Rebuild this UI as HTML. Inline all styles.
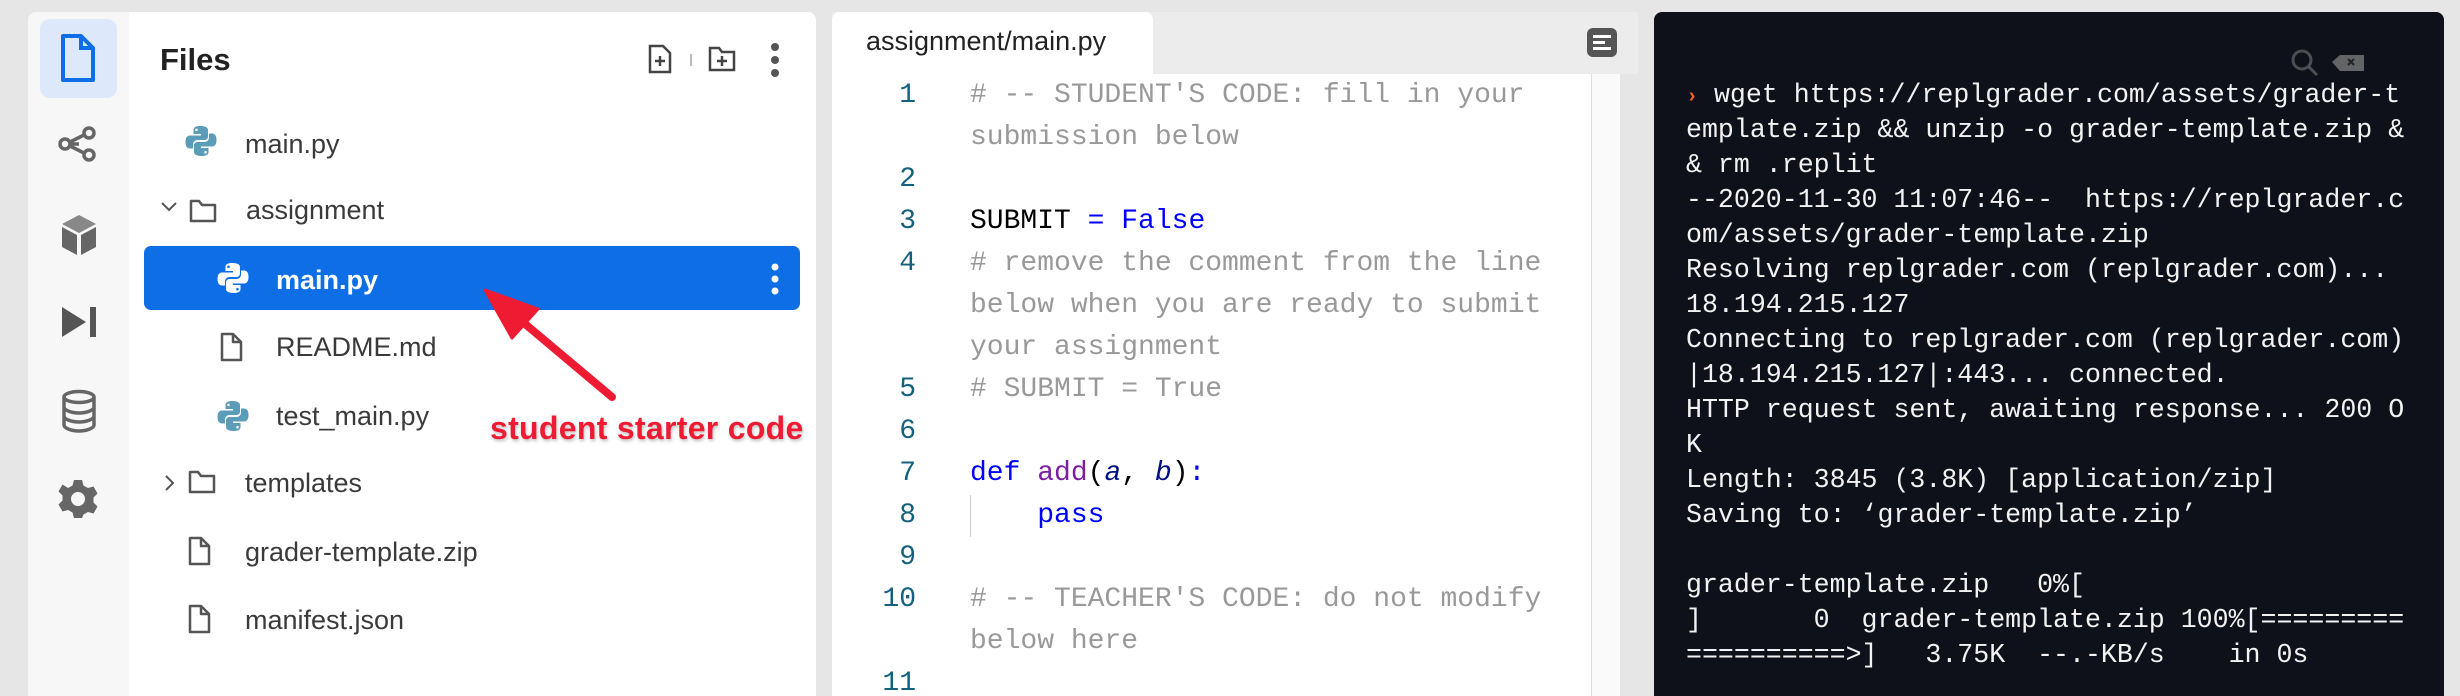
<!DOCTYPE html>
<html style="overflow:hidden;height:696px"><head><meta charset="utf-8"><style>
*{margin:0;padding:0;box-sizing:border-box}
body{width:2460px;height:696px;background:#e6e6e6;position:relative;overflow:hidden;font-family:"Liberation Sans",sans-serif}
.abs{position:absolute}
.row{position:absolute;font-size:27px;color:#3a3a3a;height:40px;line-height:40px;white-space:nowrap}
.code{position:absolute;left:970px;font-family:"Liberation Mono",monospace;font-size:28px;height:42px;line-height:42px;white-space:pre;color:#999}
.ln{position:absolute;left:880px;width:36px;text-align:right;font-family:"Liberation Mono",monospace;font-size:28px;height:42px;line-height:42px;color:#13607f}
.t{position:absolute;left:1686px;font-family:"Liberation Mono",monospace;font-size:26.6px;height:35px;line-height:35px;white-space:pre;color:#f2f2f2}
</style></head><body>
<!-- left panel -->
<div class="abs" style="left:28px;top:12px;width:788px;height:684px;background:#fff;border-radius:8px 8px 0 0"></div>
<div class="abs" style="left:28px;top:12px;width:101px;height:684px;background:#f7f7f8;border-radius:8px 0 0 0"></div>
<div class="abs" style="left:40px;top:19px;width:77px;height:79px;background:#dde9fb;border-radius:10px"></div>
<!-- rail icons -->
<svg class="abs" style="left:58px;top:33px" width="40" height="50" viewBox="0 0 40 50"><path d="M5 3h18l12 12v32H5z" fill="none" stroke="#0d6ee5" stroke-width="4" stroke-linejoin="round"/><path d="M23 3v12h12" fill="none" stroke="#0d6ee5" stroke-width="4"/></svg>
<svg class="abs" style="left:58px;top:126px" width="40" height="36" viewBox="0 0 40 36"><g fill="none" stroke="#666" stroke-width="3.5"><circle cx="7" cy="18" r="5"/><circle cx="31" cy="7" r="5"/><circle cx="31" cy="29" r="5"/><path d="M12 18h9M12 16l14-7M12 20l14 7"/></g></svg>
<svg class="abs" style="left:60px;top:213px" width="38" height="44" viewBox="0 0 38 44"><path d="M19 2L36 11 19 20 2 11z" fill="#888"/><path d="M2 14l15 8v20L2 34z" fill="#666"/><path d="M36 14l-15 8v20l15-8z" fill="#666"/></svg>
<svg class="abs" style="left:60px;top:304px" width="38" height="36" viewBox="0 0 38 36"><path d="M2 3l24 15L2 33z" fill="#555"/><rect x="30" y="3" width="6" height="30" fill="#555"/></svg>
<svg class="abs" style="left:60px;top:389px" width="38" height="44" viewBox="0 0 38 44"><g fill="none" stroke="#666" stroke-width="3.5"><ellipse cx="19" cy="8" rx="15" ry="5.5"/><path d="M4 8v28c0 3 7 6 15 6s15-3 15-6V8M4 18c0 3 7 6 15 6s15-3 15-6M4 27c0 3 7 6 15 6s15-3 15-6"/></g></svg>
<svg class="abs" style="left:58px;top:479px" width="40" height="40" viewBox="0 0 40 40"><path fill="#666" fill-rule="evenodd" d="M16 1h8l1.5 5.5 4.5 2.5 5.5-1.5 4 7-4 4v5l4 4-4 7-5.5-1.5-4.5 2.5L24 39h-8l-1.5-5.5L10 31l-5.5 1.5-4-7 4-4v-5l-4-4 4-7L10 9l4.5-2.5zM20 13a7 7 0 100 14 7 7 0 100-14z"/></svg>
<div class="abs" style="left:160px;top:42px;font-size:31px;font-weight:bold;color:#222">Files</div>
<!-- header icons -->
<svg class="abs" style="left:648px;top:44px" width="24" height="30" viewBox="0 0 24 30"><g fill="none" stroke="#444" stroke-width="2.5"><path d="M2 2h13l7 7v19H2z"/><path d="M12 12v10M7 17h10"/></g></svg>
<div class="abs" style="left:690px;top:54px;width:2px;height:12px;background:#bbb"></div>
<svg class="abs" style="left:708px;top:46px" width="28" height="26" viewBox="0 0 28 26"><g fill="none" stroke="#444" stroke-width="2.5"><path d="M2 2h9l3 4h12v18H2z"/><path d="M14 10v10M9 15h10"/></g></svg>
<svg class="abs" style="left:769px;top:42px" width="12" height="36" viewBox="0 0 12 36"><g fill="#555"><circle cx="6" cy="5" r="4"/><circle cx="6" cy="18" r="4"/><circle cx="6" cy="31" r="4"/></g></svg>
<!-- python icon def -->
<svg width="0" height="0" style="position:absolute"><defs><g id="py"><path d="M15.5 1c-7 0-7 3-7 4v4h7.5v1.5H5c-3 0-4.5 2.5-4.5 6.5s1.5 6.5 4.5 6.5h3v-4c0-2.5 2-4.5 4.5-4.5h7c2 0 3.5-1.5 3.5-3.5V5c0-2-2-4-7.5-4zM11.5 3.5a1.3 1.3 0 110 2.6 1.3 1.3 0 110-2.6z"/><path d="M16.5 31c7 0 7-3 7-4v-4H16v-1.5h11c3 0 4.5-2.5 4.5-6.5S30 8.5 27 8.5h-3v4c0 2.5-2 4.5-4.5 4.5h-7C10.5 17 9 18.5 9 20.5V27c0 2 2 4 7.5 4zM20.5 28.5a1.3 1.3 0 110-2.6 1.3 1.3 0 110 2.6z"/></g></defs></svg>
<svg class="abs" style="left:185px;top:125px" width="32" height="32" viewBox="0 0 32 32" fill="#5b9cb8"><use href="#py"/></svg>
<div class="row" style="left:245px;top:124px">main.py</div>
<svg class="abs" style="left:160px;top:201px" width="18" height="12" viewBox="0 0 18 12"><path d="M2 2l7 7 7-7" fill="none" stroke="#555" stroke-width="2"/></svg>
<svg class="abs" style="left:189px;top:198px" width="28" height="26" viewBox="0 0 28 26"><path d="M2 3h8l3 4h13v16H2z" fill="none" stroke="#555" stroke-width="2.5" stroke-linejoin="round"/></svg>
<div class="row" style="left:246px;top:190px">assignment</div>
<div class="abs" style="left:144px;top:246px;width:656px;height:64px;background:#0d6ee5;border-radius:7px"></div>
<svg class="abs" style="left:217px;top:262px" width="32" height="32" viewBox="0 0 32 32" fill="#fff"><use href="#py"/></svg>
<div class="row" style="left:276px;top:260px;color:#fff;font-weight:bold">main.py</div>
<svg class="abs" style="left:769px;top:262px" width="12" height="36" viewBox="0 0 12 36"><g fill="#fff"><circle cx="6" cy="5" r="3.5"/><circle cx="6" cy="17" r="3.5"/><circle cx="6" cy="29" r="3.5"/></g></svg>
<svg class="abs" style="left:220px;top:332px" width="24" height="30" viewBox="0 0 24 30"><g fill="none" stroke="#555" stroke-width="2.5" stroke-linejoin="round"><path d="M2 2h11l8 8v18H2z"/><path d="M13 2v8h8"/></g></svg>
<div class="row" style="left:276px;top:327px">README.md</div>
<svg class="abs" style="left:217px;top:400px" width="32" height="32" viewBox="0 0 32 32" fill="#5b9cb8"><use href="#py"/></svg>
<div class="row" style="left:276px;top:396px">test_main.py</div>
<svg class="abs" style="left:164px;top:474px" width="12" height="18" viewBox="0 0 12 18"><path d="M2 2l7 7-7 7" fill="none" stroke="#555" stroke-width="2"/></svg>
<svg class="abs" style="left:188px;top:469px" width="28" height="26" viewBox="0 0 28 26"><path d="M2 3h8l3 4h13v16H2z" fill="none" stroke="#555" stroke-width="2.5" stroke-linejoin="round"/></svg>
<div class="row" style="left:245px;top:463px">templates</div>
<svg class="abs" style="left:188px;top:536px" width="24" height="30" viewBox="0 0 24 30"><g fill="none" stroke="#555" stroke-width="2.5" stroke-linejoin="round"><path d="M2 2h11l8 8v18H2z"/><path d="M13 2v8h8"/></g></svg>
<div class="row" style="left:245px;top:532px">grader-template.zip</div>
<svg class="abs" style="left:188px;top:604px" width="24" height="30" viewBox="0 0 24 30"><g fill="none" stroke="#555" stroke-width="2.5" stroke-linejoin="round"><path d="M2 2h11l8 8v18H2z"/><path d="M13 2v8h8"/></g></svg>
<div class="row" style="left:245px;top:600px">manifest.json</div>
<!-- annotation -->
<svg class="abs" style="left:470px;top:280px" width="160" height="130" viewBox="470 280 160 130"><path d="M612 397L518 318" stroke="#ee1b33" stroke-width="8" stroke-linecap="round"/><path d="M485 290L538 309 512 338z" fill="#ee1b33" stroke="#ee1b33" stroke-width="3" stroke-linejoin="round"/></svg>
<div class="abs" style="left:490px;top:410px;font-size:32px;font-weight:bold;color:#ee1b33;white-space:nowrap;letter-spacing:0.3px;text-shadow:1px 2px 3px rgba(0,0,0,.25)">student starter code</div>
<!-- editor -->
<div class="abs" style="left:832px;top:12px;width:806px;height:62px;background:#ececec"></div>
<div class="abs" style="left:832px;top:12px;width:321px;height:64px;background:#fff;border-radius:8px 8px 0 0"></div>
<div class="abs" style="left:866px;top:26px;font-size:27px;color:#222">assignment/main.py</div>
<div class="abs" style="left:832px;top:74px;width:760px;height:622px;background:#fff;border-right:1px solid #ddd"></div>
<div class="abs" style="left:1592px;top:74px;width:28px;height:622px;background:#fafafa"></div>
<div class="abs" style="left:1587px;top:28px;width:30px;height:29px;background:#555;border-radius:6px"></div>
<div class="abs" style="left:1593px;top:35px;width:18px;height:3px;background:#fff"></div>
<div class="abs" style="left:1593px;top:41px;width:12px;height:3px;background:#fff"></div>
<div class="abs" style="left:1593px;top:47px;width:18px;height:3px;background:#fff"></div>
<div class="ln" style="top:75px">1</div><div class="code" style="top:75px"># -- STUDENT'S CODE: fill in your</div>
<div class="code" style="top:117px">submission below</div>
<div class="ln" style="top:159px">2</div>
<div class="ln" style="top:201px">3</div><div class="code" style="top:201px;color:#000">SUBMIT <span style="color:#00f">=</span> <span style="color:#00f">False</span></div>
<div class="ln" style="top:243px">4</div><div class="code" style="top:243px"># remove the comment from the line</div>
<div class="code" style="top:285px">below when you are ready to submit</div>
<div class="code" style="top:327px">your assignment</div>
<div class="ln" style="top:369px">5</div><div class="code" style="top:369px"># SUBMIT = True</div>
<div class="ln" style="top:411px">6</div>
<div class="ln" style="top:453px">7</div><div class="code" style="top:453px;color:#000"><span style="color:#00f">def</span> <span style="color:#7b1fa2">add</span>(<i style="color:#001080">a</i>, <i style="color:#001080">b</i>)<span style="color:#00f">:</span></div>
<div class="abs" style="left:970px;top:495px;width:1px;height:42px;background:#ccc"></div>
<div class="ln" style="top:495px">8</div><div class="code" style="top:495px;color:#00f">    pass</div>
<div class="ln" style="top:537px">9</div>
<div class="ln" style="top:579px">10</div><div class="code" style="top:579px"># -- TEACHER'S CODE: do not modify</div>
<div class="code" style="top:621px">below here</div>
<div class="ln" style="top:663px">11</div>
<!-- terminal -->
<div class="abs" style="left:1654px;top:12px;width:790px;height:684px;background:#0e1119;border-radius:8px 8px 0 0"></div>
<div class="t" style="top:78px"><span style="color:#f26522;font-size:20px;font-weight:bold">&#x203A;</span> wget https://replgrader.com/assets/grader-t</div>
<div class="t" style="top:113px">emplate.zip &amp;&amp; unzip -o grader-template.zip &amp;</div>
<div class="t" style="top:148px">&amp; rm .replit</div>
<div class="t" style="top:183px">--2020-11-30 11:07:46--  https://replgrader.c</div>
<div class="t" style="top:218px">om/assets/grader-template.zip</div>
<div class="t" style="top:253px">Resolving replgrader.com (replgrader.com)...</div>
<div class="t" style="top:288px">18.194.215.127</div>
<div class="t" style="top:323px">Connecting to replgrader.com (replgrader.com)</div>
<div class="t" style="top:358px">|18.194.215.127|:443... connected.</div>
<div class="t" style="top:393px">HTTP request sent, awaiting response... 200 O</div>
<div class="t" style="top:428px">K</div>
<div class="t" style="top:463px">Length: 3845 (3.8K) [application/zip]</div>
<div class="t" style="top:498px">Saving to: ‘grader-template.zip’</div>
<div class="t" style="top:568px">grader-template.zip   0%[</div>
<div class="t" style="top:603px">]       0  grader-template.zip 100%[=========</div>
<div class="t" style="top:638px">==========&gt;]   3.75K  --.-KB/s    in 0s</div>
<svg class="abs" style="left:2288px;top:48px" width="80" height="36" viewBox="0 0 80 36"><circle cx="14" cy="12" r="9" fill="none" stroke="#777" stroke-width="3" opacity=".6"/><path d="M21 19l8 8" stroke="#777" stroke-width="3" opacity=".6"/><path d="M44 14l8-7h24v16H52z" fill="#888" opacity=".7"/><path d="M60 11l6 6M66 11l-6 6" stroke="#222" stroke-width="2"/></svg>
</body></html>
